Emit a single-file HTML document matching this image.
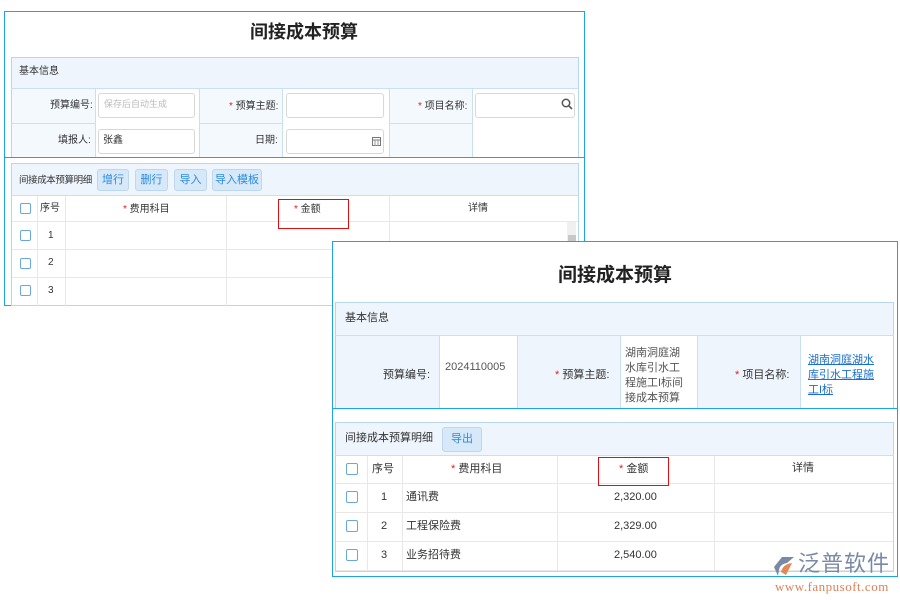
<!DOCTYPE html><html><head><meta charset="utf-8"><style>
*{margin:0;padding:0;box-sizing:border-box}
body{width:900px;height:600px;background:#fff;position:relative;overflow:hidden;font-family:"Liberation Sans","Noto Sans CJK SC",sans-serif;color:#333}
.a{position:absolute}
.pan{position:absolute;border:1px solid #1ea3e3;background:#fff}
.bg{position:absolute;background:#eef5fd;border:1px solid #b9d6ef}
.ln{position:absolute;background:#c9dff2}
.gl{position:absolute;background:#e8e8e8}
.t{position:absolute;font-size:11px;white-space:nowrap;line-height:1}
.r{color:#e02020}
.inp{position:absolute;border:1px solid #d8d8d8;border-radius:3px;background:#fff}
.btn{position:absolute;background:#d7e8f8;border:1px solid #bcd7f0;border-radius:3px;color:#2a8ce0;font-size:11px;text-align:center}
.cb{position:absolute;width:11px;height:11px;border:1px solid #6aa7dd;border-radius:2px;background:#fff}
.red{position:absolute;border:1px solid #e01010}
</style></head><body>
<!-- Panel 1 -->
<div class="pan" style="left:4px;top:11px;width:581px;height:295px"></div>
<div class="t" style="left:250px;top:23px;font-size:18px;font-weight:bold;color:#222">间接成本预算</div>
<div class="bg" style="left:11px;top:57px;width:568px;height:101px"></div>
<div class="t" style="left:19px;top:67px;font-size:10px">基本信息</div>
<div class="a" style="left:12px;top:88px;width:566px;height:69px;background:#f4f9fe"></div>
<div class="ln" style="left:11px;top:88px;width:568px;height:1px"></div>
<div class="ln" style="left:11px;top:123px;width:568px;height:1px"></div>
<div class="a" style="left:96px;top:89px;width:103px;height:68px;background:#fff"></div>
<div class="a" style="left:283px;top:89px;width:106px;height:68px;background:#fff"></div>
<div class="a" style="left:473px;top:89px;width:105px;height:68px;background:#fff"></div>
<div class="ln" style="left:95px;top:88px;width:1px;height:70px"></div>
<div class="ln" style="left:199px;top:88px;width:1px;height:70px"></div>
<div class="ln" style="left:282px;top:88px;width:1px;height:70px"></div>
<div class="ln" style="left:389px;top:88px;width:1px;height:70px"></div>
<div class="ln" style="left:472px;top:88px;width:1px;height:70px"></div>
<div class="t" style="left:50px;top:101px;font-size:10px">预算编号:</div>
<div class="inp" style="left:98px;top:93px;width:97px;height:25px"></div>
<div class="t" style="left:104px;top:100px;font-size:9px;color:#bbb">保存后自动生成</div>
<div class="t" style="left:229px;top:102px;font-size:10px"><span class="r">*</span> 预算主题:</div>
<div class="inp" style="left:286px;top:93px;width:98px;height:25px"></div>
<div class="t" style="left:418px;top:102px;font-size:10px"><span class="r">*</span> 项目名称:</div>
<div class="inp" style="left:475px;top:93px;width:100px;height:25px"></div>
<svg class="a" style="left:561px;top:98px" width="12" height="12"><circle cx="5" cy="5" r="3.7" fill="#fff" stroke="#555" stroke-width="1.5"/><line x1="7.7" y1="7.7" x2="11" y2="11" stroke="#555" stroke-width="1.6"/></svg>
<div class="t" style="left:58px;top:136px;font-size:10px">填报人:</div>
<div class="inp" style="left:98px;top:129px;width:97px;height:25px"></div>
<div class="t" style="left:103px;top:136px;font-size:10px">张鑫</div>
<div class="t" style="left:255px;top:136px;font-size:10px">日期:</div>
<div class="inp" style="left:286px;top:129px;width:98px;height:25px"></div>
<svg class="a" style="left:372px;top:136px" width="9" height="10"><rect x="0.5" y="1.5" width="8" height="8" fill="#fff" stroke="#777"/><line x1="0" y1="4" x2="9" y2="4" stroke="#777"/><line x1="3" y1="4" x2="3" y2="10" stroke="#999"/><line x1="6" y1="4" x2="6" y2="10" stroke="#999"/></svg>
<div class="a" style="left:4px;top:157px;width:581px;height:1px;background:#1ea3e3"></div>
<div class="bg" style="left:11px;top:163px;width:568px;height:143px;background:#fff"></div>
<div class="a" style="left:12px;top:164px;width:566px;height:31px;background:#eef5fd"></div>
<div class="ln" style="left:11px;top:195px;width:568px;height:1px"></div>
<div class="t" style="left:19px;top:176px;font-size:9.5px;letter-spacing:-0.4px">间接成本预算明细</div>
<div class="btn" style="left:97px;top:169px;width:32px;height:22px;line-height:20px">增行</div>
<div class="btn" style="left:135px;top:169px;width:33px;height:22px;line-height:20px">删行</div>
<div class="btn" style="left:174px;top:169px;width:33px;height:22px;line-height:20px">导入</div>
<div class="btn" style="left:212px;top:169px;width:50px;height:22px;line-height:20px">导入模板</div>
<div class="gl" style="left:12px;top:221px;width:566px;height:1px"></div>
<div class="gl" style="left:12px;top:249px;width:566px;height:1px"></div>
<div class="gl" style="left:12px;top:277px;width:566px;height:1px"></div>
<div class="gl" style="left:37px;top:196px;width:1px;height:110px"></div>
<div class="gl" style="left:65px;top:196px;width:1px;height:110px"></div>
<div class="gl" style="left:226px;top:196px;width:1px;height:110px"></div>
<div class="gl" style="left:389px;top:196px;width:1px;height:110px"></div>
<div class="cb" style="left:20px;top:203px"></div>
<div class="t" style="left:40px;top:204px;font-size:10px">序号</div>
<div class="t" style="left:123px;top:205px;font-size:10px"><span class="r">*</span> 费用科目</div>
<div class="t" style="left:294px;top:205px;font-size:10px"><span class="r">*</span> 金额</div>
<div class="t" style="left:468px;top:204px;font-size:10px">详情</div>
<div class="cb" style="left:20px;top:230px"></div><div class="t" style="left:48px;top:231px;font-size:10px">1</div>
<div class="cb" style="left:20px;top:258px"></div><div class="t" style="left:48px;top:258px;font-size:10px">2</div>
<div class="cb" style="left:20px;top:285px"></div><div class="t" style="left:48px;top:286px;font-size:10px">3</div>
<div class="a" style="left:567px;top:222px;width:9px;height:20px;background:#f0f0f0"></div>
<div class="a" style="left:568px;top:235px;width:8px;height:7px;background:#c8c8c8"></div>
<div class="red" style="left:278px;top:199px;width:71px;height:30px"></div>

<!-- Panel 2 -->
<div class="pan" style="left:332px;top:241px;width:566px;height:336px"></div>
<div class="t" style="left:558px;top:266px;font-size:19px;font-weight:bold;color:#222">间接成本预算</div>
<div class="bg" style="left:335px;top:302px;width:559px;height:107px"></div>
<div class="t" style="left:345px;top:313px;font-size:11px">基本信息</div>
<div class="ln" style="left:335px;top:335px;width:559px;height:1px"></div>
<div class="a" style="left:440px;top:336px;width:77px;height:72px;background:#fff"></div>
<div class="a" style="left:621px;top:336px;width:76px;height:72px;background:#fff"></div>
<div class="a" style="left:801px;top:336px;width:92px;height:72px;background:#fff"></div>
<div class="ln" style="left:439px;top:335px;width:1px;height:74px"></div>
<div class="ln" style="left:517px;top:335px;width:1px;height:74px"></div>
<div class="ln" style="left:620px;top:335px;width:1px;height:74px"></div>
<div class="ln" style="left:697px;top:335px;width:1px;height:74px"></div>
<div class="ln" style="left:800px;top:335px;width:1px;height:74px"></div>
<div class="t" style="left:383px;top:370px;font-size:11px">预算编号:</div>
<div class="t" style="left:445px;top:362px;font-size:11px;color:#555">2024110005</div>
<div class="t" style="left:555px;top:370px;font-size:11px"><span class="r">*</span> 预算主题:</div>
<div class="a" style="left:625px;top:346px;font-size:11px;line-height:15px;color:#555;width:62px">湖南洞庭湖水库引水工程施工I标间接成本预算</div>
<div class="t" style="left:735px;top:370px;font-size:11px"><span class="r">*</span> 项目名称:</div>
<div class="a" style="left:808px;top:353px;font-size:11px;line-height:15px;color:#1a6fd0;text-decoration:underline;width:70px">湖南洞庭湖水库引水工程施工I标</div>
<div class="a" style="left:332px;top:408px;width:566px;height:1px;background:#1ea3e3"></div>
<div class="bg" style="left:335px;top:422px;width:559px;height:150px;background:#fff"></div>
<div class="a" style="left:336px;top:423px;width:557px;height:32px;background:#eef5fd"></div>
<div class="ln" style="left:335px;top:455px;width:559px;height:1px"></div>
<div class="t" style="left:345px;top:433px;font-size:11px">间接成本预算明细</div>
<div class="btn" style="left:442px;top:427px;width:40px;height:25px;line-height:23px;font-size:11px">导出</div>
<div class="gl" style="left:336px;top:483px;width:557px;height:1px"></div>
<div class="gl" style="left:336px;top:512px;width:557px;height:1px"></div>
<div class="gl" style="left:336px;top:541px;width:557px;height:1px"></div>
<div class="gl" style="left:336px;top:570px;width:557px;height:1px"></div>
<div class="gl" style="left:367px;top:456px;width:1px;height:115px"></div>
<div class="gl" style="left:402px;top:456px;width:1px;height:115px"></div>
<div class="gl" style="left:557px;top:456px;width:1px;height:115px"></div>
<div class="gl" style="left:714px;top:456px;width:1px;height:115px"></div>
<div class="cb" style="left:346px;top:463px;width:12px;height:12px"></div>
<div class="t" style="left:372px;top:464px;font-size:11px">序号</div>
<div class="t" style="left:451px;top:464px;font-size:11px"><span class="r">*</span> 费用科目</div>
<div class="t" style="left:619px;top:464px;font-size:11px"><span class="r">*</span> 金额</div>
<div class="t" style="left:792px;top:463px;font-size:11px">详情</div>
<div class="cb" style="left:346px;top:491px;width:12px;height:12px"></div><div class="t" style="left:381px;top:492px;font-size:11px">1</div><div class="t" style="left:406px;top:492px;font-size:11px">通讯费</div><div class="t" style="left:614px;top:492px;font-size:11px">2,320.00</div>
<div class="cb" style="left:346px;top:520px;width:12px;height:12px"></div><div class="t" style="left:381px;top:521px;font-size:11px">2</div><div class="t" style="left:406px;top:521px;font-size:11px">工程保险费</div><div class="t" style="left:614px;top:521px;font-size:11px">2,329.00</div>
<div class="cb" style="left:346px;top:549px;width:12px;height:12px"></div><div class="t" style="left:381px;top:550px;font-size:11px">3</div><div class="t" style="left:406px;top:550px;font-size:11px">业务招待费</div><div class="t" style="left:614px;top:550px;font-size:11px">2,540.00</div>
<div class="red" style="left:598px;top:457px;width:71px;height:29px"></div>
<!-- logo -->
<svg class="a" style="left:770px;top:554px" width="26" height="24"><path d="M4 13 L12 3 L24 3 L17 9 Q10 10 9 16 L8 22 Z" fill="#7a8aa6"/><path d="M11 18 Q13 10 22 9 L16 21 Z" fill="#e08a5a"/></svg>
<div class="t" style="left:798px;top:553px;font-size:22px;color:#7a8aa6;letter-spacing:1px">泛普软件</div>
<div class="t" style="left:775px;top:580px;font-size:13px;color:#d9825a;font-family:'Liberation Serif',serif;letter-spacing:0.5px">www.fanpusoft.com</div>
</body></html>
